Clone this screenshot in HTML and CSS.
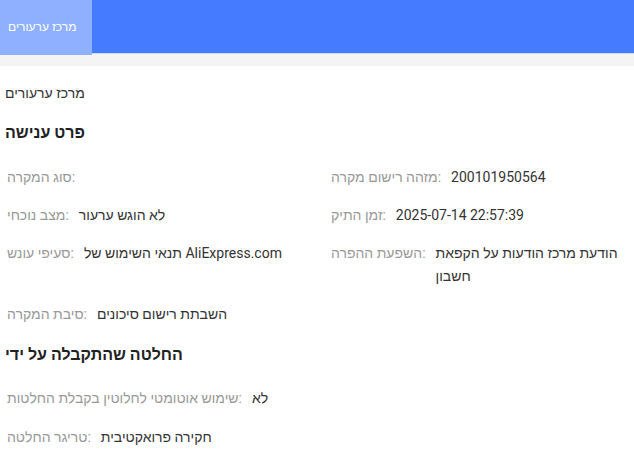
FILE: index.html
```html
<!DOCTYPE html>
<html lang="he">
<head>
<meta charset="utf-8">
<title>מרכז ערעורים</title>
<link rel="stylesheet" href="styles.css">
</head>
<body>
<header class="topbar">
  <div class="tab">מרכז ערעורים</div>
</header>
<div class="band"></div>
<main class="content">
  <div class="crumb">מרכז ערעורים</div>
  <h2 class="section-title first">פרט ענישה</h2>
  <div class="grid">
    <div class="item"><span class="label">סוג המקרה:</span><span class="value"></span></div>
    <div class="item"><span class="label">מזהה רישום מקרה:</span><span class="value">200101950564</span></div>
    <div class="item"><span class="label">מצב נוכחי:</span><span class="value">לא הוגש ערעור</span></div>
    <div class="item"><span class="label">זמן התיק:</span><span class="value">2025-07-14 22:57:39</span></div>
    <div class="item"><span class="label">סעיפי עונש:</span><span class="value">תנאי השימוש של AliExpress.com</span></div>
    <div class="item"><span class="label">השפעת ההפרה:</span><span class="value">הודעת מרכז הודעות על הקפאת חשבון</span></div>
    <div class="item"><span class="label">סיבת המקרה:</span><span class="value">השבתת רישום סיכונים</span></div>
  </div>
  <h2 class="section-title">החלטה שהתקבלה על ידי</h2>
  <div class="list">
    <div class="item"><span class="label">שימוש אוטומטי לחלוטין בקבלת החלטות:</span><span class="value">לא</span></div>
    <div class="item"><span class="label">טריגר החלטה:</span><span class="value">חקירה פרואקטיבית</span></div>
  </div>
</main>
</body>
</html>
```
FILE: styles.css
```css
html, body {
  margin: 0;
  padding: 0;
  background: #ffffff;
}
body {
  font-family: Roboto, "Liberation Sans", sans-serif;
  color: #333333;
  font-size: 14px;
}
.topbar {
  height: 53px;
  background: #457bff;
  border-bottom: 1px solid #cfdcff;
  display: flex;
}
.tab {
  width: 92px;
  height: 55px;
  background: #8eb0ff;
  color: #ffffff;
  font-size: 12px;
  display: flex;
  align-items: center;
  padding: 0 0 2px 8px;
  box-sizing: border-box;
}
.band {
  height: 12px;
  background: #f4f4f4;
}
.content {
  padding: 0 0 0 5px;
}
.crumb {
  margin-top: 17px;
  line-height: 20px;
  color: #333333;
}
.section-title {
  margin: 18px 0 0;
  font-size: 16px;
  font-weight: 700;
  line-height: 22px;
  color: #222222;
}
.section-title.first {
  margin-top: 19px;
}
.grid {
  margin-top: 22px;
  padding-left: 2px;
  display: grid;
  grid-template-columns: 324px 1fr;
  row-gap: 15px;
}
.list {
  margin-top: 21px;
  padding-left: 2px;
  display: flex;
  flex-direction: column;
  gap: 16px;
}
.item {
  display: flex;
  line-height: 23px;
}
.label {
  color: #999999;
  white-space: nowrap;
  margin-right: 10px;
}
.value {
  flex: 1;
  color: #333333;
}
```
